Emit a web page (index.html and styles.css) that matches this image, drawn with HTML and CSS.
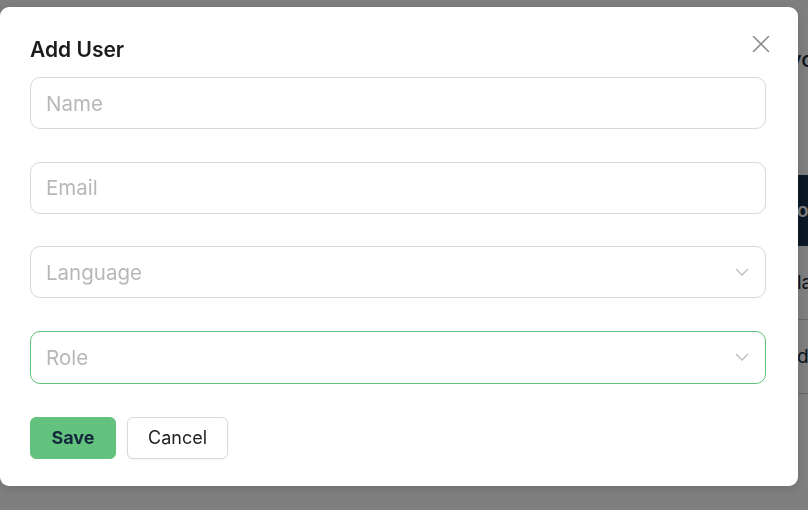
FILE: index.html
```html
<!DOCTYPE html>
<html lang="en">
<head>
<meta charset="utf-8">
<title>Add User</title>
<link rel="stylesheet" href="styles.css">
</head>
<body>
<div class="page">
  <h1 class="page-title">your users</h1>
  <div class="table">
    <div class="thead"><span class="cell">org</span></div>
    <div class="trow"><span class="cell">language</span></div>
    <div class="trow"><span class="cell">default</span></div>
  </div>
</div>

<div class="overlay">
  <div class="modal" role="dialog" aria-labelledby="modal-title">
    <div class="modal-head">
      <h2 id="modal-title" class="modal-title">Add User</h2>
      <button class="close" aria-label="Close">
        <svg width="18" height="18" viewBox="0 0 18 18" fill="none" stroke="#8a8a8a" stroke-width="1.6" stroke-linecap="round"><path d="M1.5 1.5 L16.5 16.5 M16.5 1.5 L1.5 16.5"/></svg>
      </button>
    </div>
    <div class="fields">
      <div class="field"><span class="placeholder">Name</span></div>
      <div class="field"><span class="placeholder">Email</span></div>
      <div class="field select"><span class="placeholder">Language</span>
        <svg class="chev" width="14" height="8" viewBox="0 0 14 8" fill="none" stroke="#bdbdbd" stroke-width="1.3"><path d="M1 1 L7 7 L13 1"/></svg>
      </div>
      <div class="field select focused"><span class="placeholder">Role</span>
        <svg class="chev" width="14" height="8" viewBox="0 0 14 8" fill="none" stroke="#bdbdbd" stroke-width="1.3"><path d="M1 1 L7 7 L13 1"/></svg>
      </div>
    </div>
    <div class="actions">
      <button class="btn btn-save">Save</button>
      <button class="btn btn-cancel">Cancel</button>
    </div>
  </div>
</div>
</body>
</html>
```
FILE: styles.css
```css
* { box-sizing: border-box; }
html, body { margin: 0; padding: 0; }
body {
  width: 808px;
  height: 510px;
  overflow: hidden;
  background: #ffffff;
  font-family: Inter, "Noto Sans", "Liberation Sans", sans-serif;
  color: #1f1f1f;
}

/* background page (behind the overlay) */
.page {
  padding: 44px 0 0 789px;
}
.page-title {
  margin: 0;
  font-size: 22px;
  font-weight: 500;
  color: #17293b;
  line-height: 30px;
  white-space: nowrap;
}
.table {
  margin-top: 101px;
  margin-left: -20px;
  width: 400px;
}
.thead {
  height: 71px;
  background: #16304a;
  color: #ffffff;
  display: flex;
  align-items: center;
  padding-left: 28px;
  font-size: 19px;
  font-weight: 600;
}
.trow {
  height: 74px;
  border-bottom: 1px solid #d0d0d0;
  display: flex;
  align-items: center;
  padding-left: 28px;
  font-size: 19px;
  color: #17293b;
}

/* overlay + modal */
.overlay {
  position: fixed;
  inset: 0;
  background: rgba(0, 0, 0, 0.5);
}
.modal {
  position: absolute;
  top: 7px;
  left: 0;
  width: 798px;
  height: 479px;
  background: #ffffff;
  border-radius: 9px;
  padding: 0 32px 0 30px;
  box-shadow: 0 2px 12px rgba(0,0,0,0.15);
}
.modal-head {
  display: flex;
  justify-content: space-between;
  align-items: flex-start;
  height: 70px;
}
.modal-title {
  margin: 0;
  padding-top: 29px;
  font-size: 21px;
  line-height: 28px;
  font-weight: 600;
  color: #1c1c1c;
}
.close {
  margin-top: 28px;
  margin-right: -4px;
  padding: 0;
  border: 0;
  background: transparent;
  width: 18px;
  height: 18px;
  display: flex;
}

.fields {
  display: flex;
  flex-direction: column;
  gap: 32.6px;
}
.field {
  height: 52px;
  border: 1px solid #d9d9d9;
  border-radius: 10px;
  padding: 0 16px 0 15px;
  display: flex;
  align-items: center;
  justify-content: space-between;
}
.field.focused {
  height: 53px;
  border-color: #5ec27a;
}
.placeholder {
  font-size: 20.5px;
  color: #b8b8b8;
}
.chev { display: block; margin-right: 0; }

.actions {
  display: flex;
  gap: 11px;
  margin-top: 33px;
}
.btn {
  height: 42px;
  border-radius: 6px;
  font-family: Inter, "Noto Sans", "Liberation Sans", sans-serif;
  font-size: 18px;
  padding: 0;
  cursor: pointer;
}
.btn-save {
  width: 86px;
  background: #63c27d;
  border: 1px solid #63c27d;
  color: #14273f;
  font-weight: 700;
}
.btn-cancel {
  width: 101px;
  background: #ffffff;
  border: 1px solid #d9d9d9;
  color: #1f1f1f;
  font-weight: 400;
  box-shadow: 0 1px 2px rgba(0,0,0,0.05);
}
```
